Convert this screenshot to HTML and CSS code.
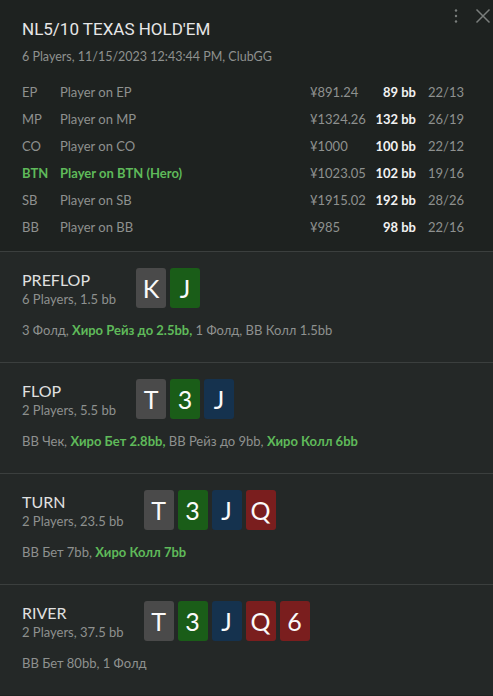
FILE: index.html
```html
<!DOCTYPE html>
<html lang="en">
<head>
    <meta charset="UTF-8">
    <meta name="viewport" content="width=device-width, initial-scale=1.0">
    <title>Hand History</title>
    <link rel="stylesheet" href="styles.css">
</head>
<body>
    <div class="hand">
        <!-- Header with players -->
        <div class="hand-header">
            <div class="tools">
                <svg width="6" height="16" viewBox="0 0 6 16">
                    <circle cx="3" cy="2.5" r="1.2" fill="#7a7e7c"/>
                    <circle cx="3" cy="8" r="1.2" fill="#7a7e7c"/>
                    <circle cx="3" cy="13.5" r="1.2" fill="#7a7e7c"/>
                </svg>
                <svg width="16" height="16" viewBox="0 0 16 16">
                    <path d="M1.5 1.5 L14.5 14.5 M14.5 1.5 L1.5 14.5" stroke="#7a7e7c" stroke-width="1.5" fill="none"/>
                </svg>
            </div>
            <h1 class="title">NL5/10 TEXAS HOLD'EM</h1>
            <p class="subtitle">6 Players, 11/15/2023 12:43:44 PM, ClubGG</p>

            <div class="players">
                <div class="player">
                    <span>EP</span><span>Player on EP</span><span>¥891.24</span><span class="bb">89 bb</span><span class="ratio">22/13</span>
                </div>
                <div class="player">
                    <span>MP</span><span>Player on MP</span><span>¥1324.26</span><span class="bb">132 bb</span><span class="ratio">26/19</span>
                </div>
                <div class="player">
                    <span>CO</span><span>Player on CO</span><span>¥1000</span><span class="bb">100 bb</span><span class="ratio">22/12</span>
                </div>
                <div class="player hero">
                    <span>BTN</span><span>Player on BTN (Hero)</span><span class="stack">¥1023.05</span><span class="bb">102 bb</span><span class="ratio">19/16</span>
                </div>
                <div class="player">
                    <span>SB</span><span>Player on SB</span><span>¥1915.02</span><span class="bb">192 bb</span><span class="ratio">28/26</span>
                </div>
                <div class="player">
                    <span>BB</span><span>Player on BB</span><span>¥985</span><span class="bb">98 bb</span><span class="ratio">22/16</span>
                </div>
            </div>
        </div>

        <!-- Streets -->
        <div class="street">
            <div class="street-top">
                <div class="street-info">
                    <div class="street-name">PREFLOP</div>
                    <div class="street-meta">6 Players, 1.5 bb</div>
                </div>
                <div class="cards">
                    <span class="card gray">K</span>
                    <span class="card green">J</span>
                </div>
            </div>
            <p class="actions">3 Фолд, <b>Хиро Рейз до 2.5bb,</b> 1 Фолд, BB Колл 1.5bb</p>
        </div>

        <div class="street">
            <div class="street-top">
                <div class="street-info">
                    <div class="street-name">FLOP</div>
                    <div class="street-meta">2 Players, 5.5 bb</div>
                </div>
                <div class="cards">
                    <span class="card gray">T</span>
                    <span class="card green">3</span>
                    <span class="card blue">J</span>
                </div>
            </div>
            <p class="actions">BB Чек, <b>Хиро Бет 2.8bb,</b> BB Рейз до 9bb, <b>Хиро Колл 6bb</b></p>
        </div>

        <div class="street">
            <div class="street-top">
                <div class="street-info">
                    <div class="street-name">TURN</div>
                    <div class="street-meta">2 Players, 23.5 bb</div>
                </div>
                <div class="cards">
                    <span class="card gray">T</span>
                    <span class="card green">3</span>
                    <span class="card blue">J</span>
                    <span class="card red">Q</span>
                </div>
            </div>
            <p class="actions">BB Бет 7bb, <b>Хиро Колл 7bb</b></p>
        </div>

        <div class="street">
            <div class="street-top">
                <div class="street-info">
                    <div class="street-name">RIVER</div>
                    <div class="street-meta">2 Players, 37.5 bb</div>
                </div>
                <div class="cards">
                    <span class="card gray">T</span>
                    <span class="card green">3</span>
                    <span class="card blue">J</span>
                    <span class="card red">Q</span>
                    <span class="card red">6</span>
                </div>
            </div>
            <p class="actions">BB Бет 80bb, 1 Фолд</p>
        </div>
    </div>
</body>
</html>
```

FILE: styles.css
```css
body {
    margin: 0;
    background: #1e2220;
    font-family: 'Segoe UI', Lato, sans-serif;
    color: #8e918f;
}

.hand {
    width: 493px;
    height: 696px;
    overflow: hidden;
}

.hand-header {
    position: relative;
    padding: 18px 22px 11px;
    background: #1e2220;
}

.tools {
    position: absolute;
    top: 8px;
    right: 2px;
    display: flex;
    align-items: center;
    gap: 16px;
}

.title {
    margin: 0;
    font-family: Roboto, sans-serif;
    font-size: 17px;
    line-height: 22px;
    font-weight: normal;
    color: #e6e6e6;
}

.subtitle {
    margin: 8px 0 0;
    font-size: 12.5px;
    line-height: 18px;
}

.players {
    margin-top: 12px;
}

.player {
    display: grid;
    grid-template-columns: 38px 250px 50px 56px 1fr;
    height: 27px;
    align-items: center;
    font-size: 13px;
}

.player .bb {
    text-align: right;
    font-weight: bold;
    color: #f2f2f2;
}

.player .ratio {
    padding-left: 12px;
}

.player.hero {
    color: #5fba5a;
    font-weight: bold;
}

.player.hero .stack,
.player.hero .ratio {
    color: #8e918f;
    font-weight: normal;
}

.street {
    border-top: 1px solid #3b3f3e;
    background: #242827;
    padding: 16px 22px 22px;
}

.street-top {
    display: flex;
    align-items: center;
    gap: 20px;
}

.street-name {
    font-size: 16px;
    line-height: 21px;
    color: #e0e0e0;
}

.street-meta {
    font-size: 13px;
    line-height: 18px;
}

.cards {
    display: flex;
    gap: 4px;
}

.card {
    width: 30px;
    height: 40px;
    border-radius: 3px;
    display: flex;
    align-items: center;
    justify-content: center;
    font-size: 25px;
    color: #fafafa;
}

.card.gray { background: #4a4a4a; }
.card.green { background: #1a5d18; }
.card.blue { background: #15324e; }
.card.red { background: #7a1e1e; }

.actions {
    margin: 12px 0 0;
    font-size: 13px;
    line-height: 20px;
}

.actions b {
    color: #5fba5a;
}
```
